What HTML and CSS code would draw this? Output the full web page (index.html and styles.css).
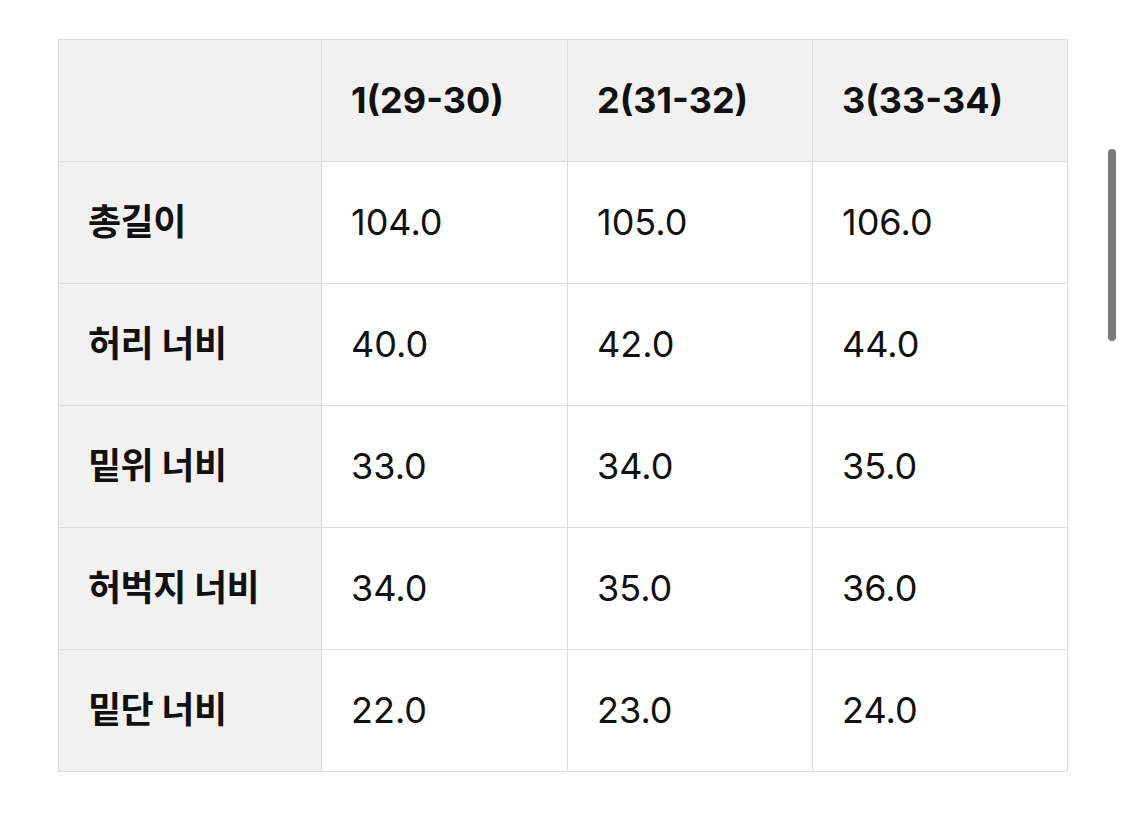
FILE: index.html
```html
<!DOCTYPE html>
<html lang="ko">
<head>
<meta charset="utf-8">
<link rel="stylesheet" href="styles.css">
</head>
<body>
<div class="page">
  <table class="size-table">
    <colgroup>
      <col class="c0"><col class="c1"><col class="c2"><col class="c3">
    </colgroup>
    <thead>
      <tr><th class="corner"></th><th>1(29-30)</th><th>2(31-32)</th><th>3(33-34)</th></tr>
    </thead>
    <tbody>
      <tr><th>총길이</th><td>104.0</td><td>105.0</td><td>106.0</td></tr>
      <tr><th>허리 너비</th><td>40.0</td><td>42.0</td><td>44.0</td></tr>
      <tr><th>밑위 너비</th><td>33.0</td><td>34.0</td><td>35.0</td></tr>
      <tr><th>허벅지 너비</th><td>34.0</td><td>35.0</td><td>36.0</td></tr>
      <tr><th>밑단 너비</th><td>22.0</td><td>23.0</td><td>24.0</td></tr>
    </tbody>
  </table>
</div>
<div class="scrollbar"></div>
</body>
</html>
```

FILE: styles.css
```css
html, body {
  margin: 0;
  padding: 0;
  background: #ffffff;
}
body {
  font-family: Inter, "Noto Sans CJK KR", "Noto Sans", sans-serif;
  color: #111111;
  width: 1125px;
  height: 838px;
  overflow: hidden;
  position: relative;
}
.page {
  padding: 39px 0 0 58px;
}
.size-table {
  border-collapse: collapse;
  table-layout: fixed;
  width: 1009px;
}
.c0 { width: 263px; }
.c1 { width: 246px; }
.c2 { width: 245px; }
.c3 { width: 255px; }
.size-table th,
.size-table td {
  border: 1px solid #dcdcdc;
  height: 121px;
  padding: 0 0 0 29px;
  line-height: 1.2;
  text-align: left;
  vertical-align: middle;
  font-size: 36px;
  letter-spacing: 0;
}
.size-table thead th {
  background: #f1f1f1;
  font-weight: 700;
}
.size-table tbody th {
  background: #f1f1f1;
  font-weight: 700;
  letter-spacing: -0.5px;
}
.size-table td {
  font-weight: 400;
  background: #ffffff;
}
.scrollbar {
  position: absolute;
  left: 1108px;
  top: 149px;
  width: 8px;
  height: 192px;
  border-radius: 4px;
  background: #7a7a7a;
}
```
